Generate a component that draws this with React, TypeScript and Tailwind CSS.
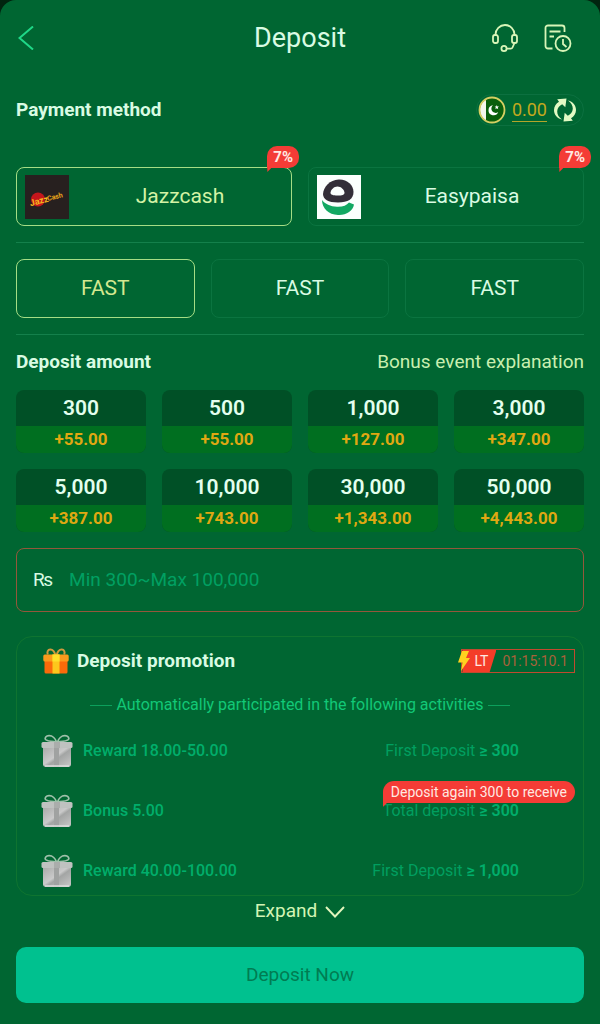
import { useState } from 'react';
import clsx from 'clsx';

interface Amount {
  value: string;
  bonus: string;
}

interface Promotion {
  title: string;
  condition: string;
  threshold: string;
  tip?: string;
}

const METHODS = [
  { name: 'Jazzcash', bonus: '7%', Logo: JazzcashLogo },
  { name: 'Easypaisa', bonus: '7%', Logo: EasypaisaLogo },
];

const CHANNELS = ['FAST', 'FAST', 'FAST'];

const AMOUNTS: Amount[] = [
  { value: '300', bonus: '+55.00' },
  { value: '500', bonus: '+55.00' },
  { value: '1,000', bonus: '+127.00' },
  { value: '3,000', bonus: '+347.00' },
  { value: '5,000', bonus: '+387.00' },
  { value: '10,000', bonus: '+743.00' },
  { value: '30,000', bonus: '+1,343.00' },
  { value: '50,000', bonus: '+4,443.00' },
];

const PROMOTIONS: Promotion[] = [
  { title: 'Reward 18.00-50.00', condition: 'First Deposit', threshold: '300' },
  { title: 'Bonus 5.00', condition: 'Total deposit', threshold: '300', tip: 'Deposit again 300 to receive' },
  { title: 'Reward 40.00-100.00', condition: 'First Deposit', threshold: '1,000' },
];

function JazzcashLogo() {
  return (
    <svg className="size-11 shrink-0" viewBox="0 0 44 44" aria-hidden="true">
      <rect width="44" height="44" fill="#27201f" />
      <circle cx="13" cy="24.500" r="7" fill="#c4161c" />
      <g transform="rotate(-14 22 23)" fontFamily="Roboto, sans-serif" fontWeight="700">
        <text x="4" y="27" fontSize="9" fill="#f6b51d">Jazz</text>
        <text x="22" y="26" fontSize="7" fill="#e9a31b">Cash</text>
      </g>
    </svg>
  );
}

function EasypaisaLogo() {
  return (
    <svg className="size-11 shrink-0" viewBox="0 0 44 44" aria-hidden="true">
      <rect width="44" height="44" fill="#fbfffd" />
      <path
        d="M21.500 4.500C30 4 36.500 10 36.500 17C36.500 24 31 27.500 21 27.500C11 27.500 6 24 6 19C6.500 11.500 13 5 21.500 4.500Z"
        fill="#332e38"
      />
      <path d="M20.500 11.500C24 11.500 27 14.500 27.500 17.500C27.700 20 25 20.500 20.500 20.500C16 20.500 13.300 19.800 13.500 17.500C14 14.500 17 11.500 20.500 11.500Z" fill="#fbfffd" />
      <path
        d="M5 25C8 29 13.500 31.500 20 31.800C26 32 29.500 30.500 32 27.500L37 29.500C36 36 29 40.500 21 40C11.500 39.500 5 33.500 5 25Z"
        fill="#12a862"
      />
    </svg>
  );
}

function BackIcon() {
  return (
    <svg className="h-6 w-4" viewBox="0 0 16 24" fill="none" stroke="#1fd888" strokeWidth="2" aria-hidden="true">
      <path d="M15 .5 1.500 12 15 23.500" />
    </svg>
  );
}

function HeadsetIcon() {
  return (
    <svg className="h-7 w-6.5" viewBox="0 0 26 28" fill="none" stroke="#d8f5b8" strokeWidth="1.800" aria-hidden="true">
      <path d="M3.500 11V10.500a9.500 9.500 0 0 1 19 0V11" />
      <rect x="1" y="11" width="5" height="8" rx="2" />
      <rect x="20" y="11" width="5" height="8" rx="2" />
      <path d="M22.500 19l-2 4.500a2 2 0 0 1-1.800 1.200H15" />
      <circle cx="12" cy="24.500" r="2.600" />
    </svg>
  );
}

function RecordIcon() {
  return (
    <svg className="h-7 w-7" viewBox="0 0 28 28" fill="none" stroke="#d8f5b8" strokeWidth="1.800" aria-hidden="true">
      <path d="M8.500 24.500H4a2.500 2.500 0 0 1-2.500-2.500V4A2.500 2.500 0 0 1 4 1.500h14A2.500 2.500 0 0 1 20.500 4v4" />
      <path d="M5.500 7.500h11M5.500 12.500h4.500" />
      <circle cx="19" cy="19.500" r="7.500" />
      <path d="M19 15v5l3.500 3" />
    </svg>
  );
}

function FlagIcon() {
  return (
    <svg className="size-7" viewBox="0 0 28 28" aria-hidden="true">
      <defs>
        <clipPath id="flag-round">
          <circle cx="14" cy="14" r="12" />
        </clipPath>
      </defs>
      <g clipPath="url(#flag-round)">
        <rect width="28" height="28" fill="#0a5f0c" />
        <rect width="8" height="28" fill="#f4f6ec" />
      </g>
      <circle cx="14" cy="14" r="12.500" fill="none" stroke="#d6cf62" strokeWidth="1.800" />
      <path d="M15 9.300a5 5 0 1 0 5.200 6.700 4.200 4.200 0 1 1-5.200-6.700Z" fill="#fff" />
      <path d="m18.800 9 .6 1.500 1.600.1-1.200 1 .4 1.600-1.400-.9-1.400.9.4-1.600-1.200-1 1.600-.1Z" fill="#fff" />
    </svg>
  );
}

function RefreshIcon() {
  return (
    <svg className="h-6 w-6" viewBox="0 0 24 24" fill="#e2fac4" aria-hidden="true">
      <path d="M9 21.500C4 20.500 1 16.500 1 12 1 8.500 3 5.500 6 3.800L4.200 1.200 13.500.6 12.300 9.200 9.200 6.300C6.500 7.700 4.300 10 4.200 13.200 4.100 16.500 6 19.500 9 21.500Z" />
      <path d="M15 2.500C20 3.500 23 7.500 23 12c0 3.500-2 6.500-5 8.200l1.800 2.600-9.300.6 1.200-8.600 3.100 2.900c2.700-1.400 4.900-3.700 5-6.900.1-3.300-1.800-6.300-4.800-8.300Z" />
    </svg>
  );
}

function OrangeGiftIcon() {
  return (
    <svg className="size-6.5" viewBox="0 0 26 26" aria-hidden="true">
      <g fill="none" stroke="#cf9a3e" strokeWidth="2">
        <path d="M12.500 7.500C11.500 3.500 9.500 1.500 7.200 1.600 4.800 1.700 3.800 4 4.800 6.500" />
        <path d="M13.500 7.500c1-4 3-6 5.300-5.900 2.400.1 3.400 2.400 2.400 4.900" />
      </g>
      <rect x="1.500" y="12" width="23" height="13.500" rx="1.500" fill="#fa6a0a" />
      <rect x=".3" y="6.500" width="25.400" height="7" rx="1.500" fill="#fb9a1c" />
      <rect x="9.500" y="6.500" width="7" height="19" fill="#fdc71c" />
      <rect x="9.500" y="6.500" width="7" height="7" fill="#fde02a" />
    </svg>
  );
}

function GreyGiftIcon() {
  return (
    <svg className="h-8.5 w-8" viewBox="0 0 32 34" aria-hidden="true">
      <defs>
        <linearGradient id="gift-box" x1="0" y1="0" x2="1" y2="1">
          <stop offset="0" stopColor="#a9aaa9" />
          <stop offset="0.450" stopColor="#cacaca" />
          <stop offset="0.550" stopColor="#a3a5a4" />
          <stop offset="1" stopColor="#c9c9c9" />
        </linearGradient>
      </defs>
      <g fill="none" stroke="#9fc0aa" strokeWidth="1.700">
        <path d="M15.500 8C12 7.500 6.500 7.500 4.500 5.500 3.500 4 5 1.800 8 1.700c3.500-.1 6.500 3 7.500 6.300Z" />
        <path d="M16.500 8c3.500-.5 9-.5 11-2.500 1-1.500-.5-3.700-3.500-3.800-3.500-.1-6.500 3-7.500 6.300Z" />
      </g>
      <path d="M2 13h28v17a3 3 0 0 1-3 3H5a3 3 0 0 1-3-3Z" fill="url(#gift-box)" />
      <path d="M13 13h5v20h-5Z" fill="#a0a2a1" />
      <path d="M4 32h24" stroke="#dcdcdc" strokeWidth="1.500" />
      <rect x=".5" y="8" width="31" height="6" rx="1.500" fill="#bfc2c0" />
      <path d="M13 8h6v6h-6Z" fill="#aaadab" />
    </svg>
  );
}

function BoltIcon() {
  return (
    <svg className="h-5 w-3" viewBox="0 0 12 20" aria-hidden="true">
      <path d="M4 0h7L8 7h4L3 20l1.500-8.500H0Z" fill="#ffd21f" />
    </svg>
  );
}

function ChevronDown() {
  return (
    <svg className="h-3 w-5" viewBox="0 0 20 12" fill="none" stroke="#e2f5bd" strokeWidth="1.900" aria-hidden="true">
      <path d="m1 1 9 9.500L19 1" />
    </svg>
  );
}

function Divider() {
  return <hr className="mt-4 border-t border-[#14804b]" />;
}

export default function App() {
  const [method, setMethod] = useState(0);
  const [channel, setChannel] = useState(0);
  const [amount, setAmount] = useState('');

  return (
    <div className="min-h-screen bg-[#01240f] font-['Roboto',sans-serif]">
      <main className="min-h-screen rounded-t-2xl bg-[#006632] px-4 pb-5 text-[#d9fbe3]">
        {/* Header */}
        <header className="grid h-[76px] grid-cols-[1fr_auto_1fr] items-center">
          <button type="button" aria-label="Back" className="flex w-6 pl-0.5">
            <BackIcon />
          </button>
          <h1 className="text-[27px] leading-8">Deposit</h1>
          <div className="flex items-center justify-end gap-[26px] pr-3">
            <button type="button" aria-label="Customer service">
              <HeadsetIcon />
            </button>
            <button type="button" aria-label="Deposit record">
              <RecordIcon />
            </button>
          </div>
        </header>

        {/* Balance */}
        <div className="mt-4 flex h-9 items-center justify-between">
          <h2 className="text-[19px] font-bold">Payment method</h2>
          <div className="flex h-8 items-center gap-1.5 rounded-full border border-[#0c7040] pr-1.5 pl-px">
            <FlagIcon />
            <span className="border-b border-[#b3a52a] text-lg leading-[22px] text-[#c2a91f]">0.00</span>
            <button type="button" aria-label="Refresh balance">
              <RefreshIcon />
            </button>
          </div>
        </div>

        {/* Payment methods */}
        <div className="mt-[39px] grid grid-cols-2 gap-4">
          {METHODS.map(({ name, bonus, Logo }, i) => (
            <button
              key={name}
              type="button"
              aria-pressed={method === i}
              onClick={() => setMethod(i)}
              className={clsx(
                'relative flex h-[59px] items-center gap-2 rounded-lg border pr-2 pl-2 text-[21px]',
                method === i ? 'border-[#a5dd85] text-[#d3f3a5]' : 'border-[#0b7440]',
              )}
            >
              <Logo />
              <span className="flex-1">{name}</span>
              <span className="absolute -top-[22px] -right-2 rounded-[10px] rounded-bl-none bg-[#f43c36] px-1.5 text-[15px] leading-[22px] font-bold text-[#ffe9e2]">
                {bonus}
                <span className="absolute top-full left-0 size-1 bg-[#f43c36] [clip-path:polygon(0_0,100%_0,0_100%)]" />
              </span>
            </button>
          ))}
        </div>

        <Divider />

        {/* Channels */}
        <div className="mt-4 grid grid-cols-3 gap-4">
          {CHANNELS.map((label, i) => (
            <button
              key={i}
              type="button"
              aria-pressed={channel === i}
              onClick={() => setChannel(i)}
              className={clsx(
                'h-[59px] rounded-lg border text-[21px]',
                channel === i ? 'border-[#a5dd85] text-[#d3e890]' : 'border-[#0b7440]',
              )}
            >
              {label}
            </button>
          ))}
        </div>

        <Divider />

        {/* Amounts */}
        <div className="flex h-[55px] items-center justify-between">
          <h2 className="text-[19px] font-bold">Deposit amount</h2>
          <a href="#bonus" className="text-[19px] text-[#c9efb0]">
            Bonus event explanation
          </a>
        </div>

        <div className="grid grid-cols-4 gap-4">
          {AMOUNTS.map(({ value, bonus }) => (
            <button
              key={value}
              type="button"
              onClick={() => setAmount(value)}
              className="overflow-hidden rounded-lg bg-[#005026] text-center"
            >
              <span className="block text-[21px] leading-9 font-semibold text-[#e3ffee]">{value}</span>
              <span className="block bg-[#006f20] text-[17px] leading-[27px] font-bold text-[#dfa812]">{bonus}</span>
            </button>
          ))}
        </div>

        <label className="mt-4 flex h-16 items-center gap-4 rounded-lg border border-[#94573b] px-4">
          <span className="text-[19px]">₨</span>
          <input
            type="text"
            aria-label="Deposit amount"
            value={amount}
            onChange={(e) => setAmount(e.target.value)}
            placeholder="Min 300~Max 100,000"
            className="min-w-0 flex-1 bg-transparent text-[19px] outline-none placeholder:text-[#00a062]"
          />
        </label>

        {/* Promotions */}
        <section className="mt-6 rounded-2xl border border-[#0f7430] pt-3 pb-[7px]">
          <div className="flex h-6 items-center justify-between pr-2 pl-[26px]">
            <h2 className="flex items-center gap-2 text-[19px] font-bold">
              <OrangeGiftIcon />
              Deposit promotion
            </h2>
            <div className="relative flex h-6 items-center border border-[#c04a2f] text-sm">
              <span className="h-full bg-[#f43c28] pr-2 pl-3 leading-[22px] text-[#ffe9e2] [clip-path:polygon(0_0,100%_0,80%_100%,0_100%)]">
                LT
              </span>
              <span className="absolute top-px -left-1">
                <BoltIcon />
              </span>
              <span className="px-1.5 text-[#a8623a]">01:15:10.1</span>
            </div>
          </div>

          <p className="mt-5 flex h-6 items-center justify-center gap-1 text-base text-[#12c877]">
            <span className="h-px w-5.5 bg-[#0ca05c]" />
            Automatically participated in the following activities
            <span className="h-px w-5.5 bg-[#0ca05c]" />
          </p>

          <ul className="mt-[17px] flex flex-col gap-[26px] pr-16 pl-6 text-base text-[#00ae6b]">
            {PROMOTIONS.map(({ title, condition, threshold, tip }) => (
              <li key={title} className="relative flex h-[34px] items-center">
                <GreyGiftIcon />
                <span className="ml-2.5 flex-1 font-medium">{title}</span>
                <span className="text-[#009f60]">
                  {condition} <b className="font-semibold text-[#00ae6b]">≥ {threshold}</b>
                </span>
                {tip && (
                  <span className="absolute -top-[13px] -right-14 rounded-[11px] rounded-bl-none bg-[#f43c36] px-2 text-sm leading-[22px] text-[#ffe9e2]">
                    {tip}
                    <span className="absolute top-full left-0 size-1 bg-[#f43c36] [clip-path:polygon(0_0,100%_0,0_100%)]" />
                  </span>
                )}
              </li>
            ))}
          </ul>
        </section>

        <button type="button" className="mx-auto flex h-[31px] items-center gap-2 text-[19px] text-[#d3f5b5]">
          Expand
          <ChevronDown />
        </button>

        <button type="button" className="mt-5 h-14 w-full rounded-[10px] bg-[#00c18f] text-[19px] text-[#007c52]">
          Deposit Now
        </button>
      </main>
    </div>
  );
}
